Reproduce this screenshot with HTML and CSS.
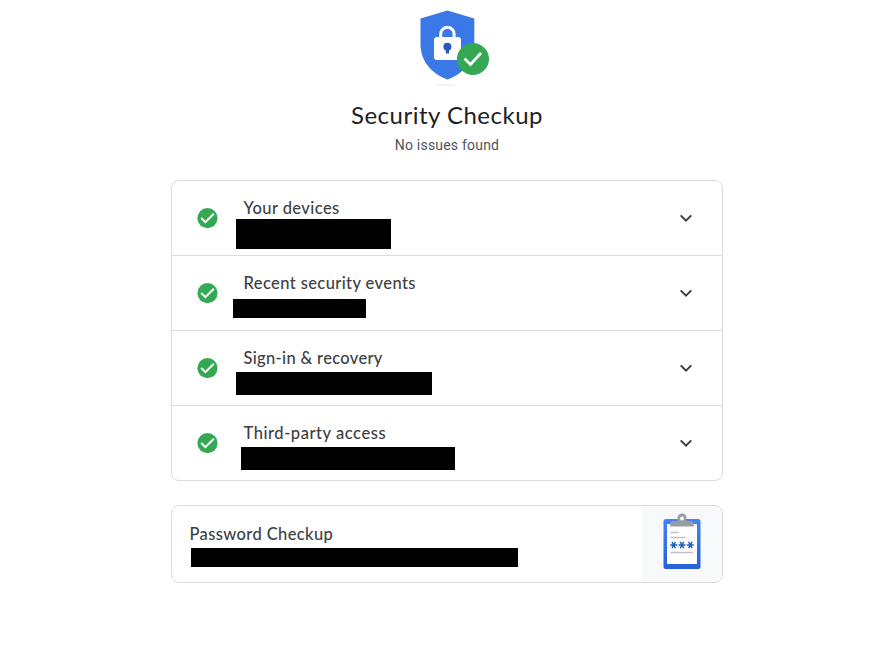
FILE: index.html
```html
<!DOCTYPE html>
<html lang="en">
<head>
<meta charset="utf-8">
<title>Security Checkup</title>
<link rel="stylesheet" href="styles.css">
</head>
<body>
<svg width="0" height="0" class="defs" aria-hidden="true">
  <symbol id="check" viewBox="0 0 21 21"><circle cx="10.5" cy="10.1" r="10.1" fill="#34a853"/><path d="M4.2 10l4.200 4.200 8.400-8.500" fill="none" stroke="#fff" stroke-width="2"/></symbol>
  <symbol id="chevron" viewBox="0 0 24 24"><path d="M6.700 9.400L12 14.700l5.300-5.300" fill="none" stroke="#3c4043" stroke-width="2"/></symbol>
</svg>
<main class="page">
  <header class="header">
    <svg class="shield" width="76" height="80" viewBox="0 0 76 80">
      <path d="M34.500 2.500L61.300 10.500V36C61.300 52 52 65 34.500 71.500C17 65 7.500 52 7.500 36V10.500Z" fill="#3b78e7"/>
      <path d="M27.700 31v-5a6.700 6.700 0 0 1 13.400 0V31" fill="none" stroke="#fff" stroke-width="3"/>
      <rect x="21" y="29" width="27" height="23" rx="3" fill="#fff"/>
      <circle cx="34.400" cy="38.700" r="4" fill="#285bb8"/><path d="M32.800 39h3.200v6.500h-3.200z" fill="#285bb8"/>
      <ellipse cx="33" cy="77" rx="10" ry=".6" fill="#e2e3e5"/>
      <circle cx="60" cy="51" r="16" fill="#34a853"/>
      <path d="M51.500 50.500l6 6 10.500-11.500" fill="none" stroke="#fff" stroke-width="2.700"/>
    </svg>
    <h1 class="title">Security Checkup</h1>
    <p class="status">No issues found</p>
  </header>
  <section class="card">
    <div class="row"><svg class="check"><use href="#check"/></svg><div class="info"><h2 class="label devices">Your devices</h2><div class="redacted bar-devices"></div></div><svg class="chevron"><use href="#chevron"/></svg></div>
    <div class="row"><svg class="check"><use href="#check"/></svg><div class="info"><h2 class="label events">Recent security events</h2><div class="redacted bar-events"></div></div><svg class="chevron"><use href="#chevron"/></svg></div>
    <div class="row"><svg class="check"><use href="#check"/></svg><div class="info"><h2 class="label recovery">Sign-in &amp; recovery</h2><div class="redacted bar-recovery"></div></div><svg class="chevron"><use href="#chevron"/></svg></div>
    <div class="row"><svg class="check"><use href="#check"/></svg><div class="info"><h2 class="label access">Third-party access</h2><div class="redacted bar-access"></div></div><svg class="chevron"><use href="#chevron"/></svg></div>
  </section>
  <section class="card password">
    <div class="password-info"><h2 class="label passwords">Password Checkup</h2><div class="redacted bar-password"></div></div>
    <div class="art">
      <svg width="40" height="58" viewBox="0 0 40 58">
        <defs><linearGradient id="board" x2="0" y2="1"><stop stop-color="#4285f4"/><stop offset="1" stop-color="#2560d8"/></linearGradient></defs>
        <rect x="1.500" y="6" width="37" height="50" rx="2.500" fill="url(#board)"/>
        <path d="M5 11h30v40H5z" fill="#fff"/>
        <path d="M8.300 13.500V11c0-2 1-3 3-3h4.200V5a4.500 4.500 0 0 1 9 0v3h4.300c2 0 3 1 3 3v2.500z" fill="#989da3"/>
        <circle cx="20" cy="5.500" r="2" fill="#f8f9fa"/>
        <path d="M8.500 19.500h8M8.500 24.500h15M8.500 39.500h23" stroke="#bdc1c6" stroke-width="1.600"/>
        <path id="star" d="M8.200 32h7M10 28.900l3.400 6.200M13.400 28.900l-3.400 6.200" stroke="#1d5fc3" stroke-width="1.400"/>
        <use href="#star" x="8.300"/><use href="#star" x="16.600"/>
      </svg>
    </div>
  </section>
</main>
</body>
</html>
```
FILE: styles.css
```css
* { box-sizing: border-box; }
body { margin: 0; background: #fff; font-family: Roboto, sans-serif; }
h1, h2, p { margin: 0; }
.defs { display: block; height: 0; }
.page { width: 552px; margin: 0 0 0 171px; }
.header { height: 180px; padding-top: 8px; display: flex; flex-direction: column; align-items: center; }
.shield { display: block; flex: none; margin-left: 8px; }
.title { margin-top: 11px; font: 400 24px/32px Lato, sans-serif; color: #202124; letter-spacing: .5px; white-space: nowrap; }
.status { margin-top: 4px; font-size: 14px; line-height: 20px; letter-spacing: .2px; color: #50545a; }
.card { border: 1px solid #dadce0; border-radius: 8px; overflow: hidden; }
.row { display: flex; align-items: center; height: 75px; padding: 0 25px; border-bottom: 1px solid #dadce0; }
.row:last-child { height: 74px; border-bottom: 0; }
.check { width: 21px; height: 21px; flex: none; }
.info { align-self: flex-start; flex: 1; margin-left: 26px; padding-top: 15px; }
.chevron { width: 24px; height: 24px; flex: none; margin-right: -.5px; }
.label { height: 23px; font: 500 16.500px/24px Lato, sans-serif; color: #3c4043; white-space: nowrap; text-indent: -.5px; }
.devices { letter-spacing: .42px; }
.events { letter-spacing: .4px; }
.recovery { letter-spacing: .33px; }
.access { letter-spacing: .55px; }
.passwords { letter-spacing: .38px; }
.redacted { background: #000; }
.bar-devices { width: 155px; height: 30px; margin-left: -8px; }
.bar-events { width: 133px; height: 19px; margin: 5px 0 0 -11px; }
.bar-recovery { width: 196px; height: 23px; margin: 3px 0 0 -8px; }
.bar-access { width: 214px; height: 23px; margin: 3px 0 0 -3px; }
.password { display: flex; height: 78px; margin-top: 24px; }
.password-info { flex: 1; padding: 16px 0 0 18px; }
.bar-password { width: 327px; height: 19px; margin: 3px 0 0 1px; }
.art { width: 80px; background: #f7f9fb; display: flex; padding-top: 7px; justify-content: center; }
```
